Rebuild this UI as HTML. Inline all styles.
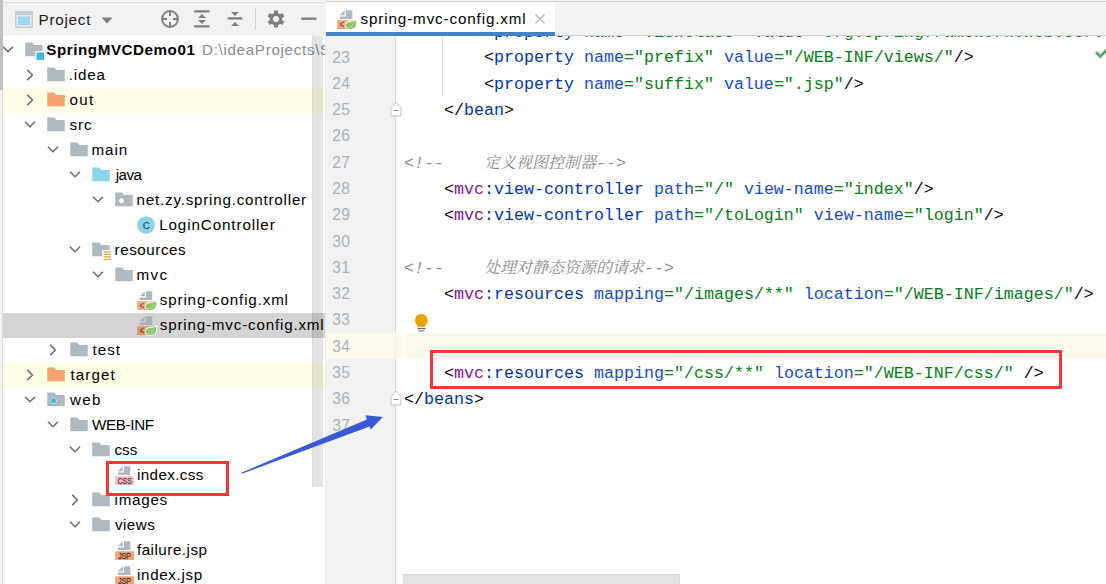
<!DOCTYPE html>
<html lang="zh"><head><meta charset="utf-8"><title>spring-mvc-config.xml</title>
<style>
html,body{margin:0;padding:0}
body{width:1106px;height:584px;overflow:hidden;position:relative;background:#fff;font-family:"Liberation Sans","Noto Sans CJK SC",sans-serif}
.abs,.ic,.row,.ln,.cl,.lab{position:absolute}
.ic{display:block;overflow:visible}
#tree{position:absolute;left:3px;top:36px;width:322px;height:548px;background:#fff;overflow:hidden}
.row{left:0;width:322px;height:25px}
.lab{white-space:nowrap;font-size:15.2px;letter-spacing:0.8px;color:#000;line-height:25px;top:-1px}
.lab b{font-weight:bold;letter-spacing:-.2px}
.pth{color:#8c8c8c;margin-left:6.600px;letter-spacing:.68px}
#ed{position:absolute;left:326px;top:36px;width:780px;height:548px;overflow:hidden;background:#fff}
.ln{left:0;width:30px;text-align:left;font-family:"Liberation Sans",sans-serif;font-size:15.600px;letter-spacing:.3px;color:#a9b0b6;line-height:26.28px;height:26.28px;white-space:pre}
.cl{white-space:pre;font-family:"Liberation Mono","Noto Serif CJK SC",monospace;font-size:16.67px;letter-spacing:0.0px;line-height:26.28px;height:26.28px;color:#080808}
.k{color:#080808}.t{color:#0033b3}.n{color:#871094}.a{color:#174ad4}.s{color:#067d17}
.c{color:#8c8c8c;font-style:italic}
.zh{font-family:"Noto Serif CJK SC",serif;font-size:16px;letter-spacing:0}
</style></head><body>
<div class="abs" style="left:0;top:0;width:1106px;height:3px;background:#f3f3f3"></div>
<div class="abs" style="left:0;top:1px;width:326px;height:1px;background:#f9f9f9"></div>
<div class="abs" style="left:0;top:2px;width:326px;height:1px;background:#dcdcdc"></div>
<div class="abs" style="left:326px;top:1px;width:780px;height:1px;background:#d2d2d2"></div>
<div class="abs" style="left:0;top:0;width:2px;height:584px;background:#f4f4f4"></div>
<div class="abs" style="left:2px;top:0;width:1px;height:584px;background:#dcdcdc"></div>
<div class="abs" style="left:0;top:0;width:3px;height:90px;background:#c0c0c0"></div>
<div class="abs" style="left:3px;top:3px;width:323px;height:33px;background:#f2f2f2"></div>
<svg class="ic" style="left:15px;top:11px" width="18" height="17" viewBox="0 0 18 17"><rect x="0" y="0" width="18" height="17" fill="#c9ced3"/><rect x="1.500" y="4" width="15" height="11.500" fill="#e8ecef"/><rect x="3" y="5.500" width="12" height="8.500" fill="#9bd6ee"/></svg>
<div class="abs" style="left:38.600px;top:3px;height:34px;line-height:34px;font-size:15.200px;letter-spacing:.75px;color:#1a1a1a;white-space:nowrap">Project</div>
<svg class="ic" style="left:101px;top:17px" width="12" height="7" viewBox="0 0 12 7"><path d="M0.500 0.500h11L6 6.500z" fill="#7f7f7f"/></svg>
<svg class="ic" style="left:158.700px;top:8.100px" width="22" height="22" viewBox="0 0 22 22"><circle cx="11" cy="11" r="7.900" fill="none" stroke="#7f7f7f" stroke-width="2"/><path d="M11 3v5M11 14v5M3 11h5M14 11h5" stroke="#7f7f7f" stroke-width="2"/></svg>
<svg class="ic" style="left:193px;top:8px" width="18" height="22" viewBox="0 0 18 22"><path d="M1.200 3.400h15.300M1.200 18.300h15.300" stroke="#7f7f7f" stroke-width="2.300"/><path d="M9 6l4 4H5zM9 16l4-4H5z" fill="#7f7f7f"/></svg>
<svg class="ic" style="left:226px;top:8px" width="18" height="22" viewBox="0 0 18 22"><path d="M1.700 10.400h14.600" stroke="#7f7f7f" stroke-width="2.300"/><path d="M9 8l4-4H5zM9 14l4 4H5z" fill="#7f7f7f"/></svg>
<div class="abs" style="left:255px;top:8px;width:1px;height:22px;background:#d1d1d1"></div>
<svg class="ic" style="left:267px;top:10px" width="18" height="18" viewBox="-9 -9 18 18"><g fill="#7f7f7f"><rect x="-2" y="-8.500" width="4" height="5" transform="rotate(0)"/><rect x="-2" y="-8.500" width="4" height="5" transform="rotate(60)"/><rect x="-2" y="-8.500" width="4" height="5" transform="rotate(120)"/><rect x="-2" y="-8.500" width="4" height="5" transform="rotate(180)"/><rect x="-2" y="-8.500" width="4" height="5" transform="rotate(240)"/><rect x="-2" y="-8.500" width="4" height="5" transform="rotate(300)"/></g><circle r="4.700" fill="none" stroke="#7f7f7f" stroke-width="3.200"/></svg>
<svg class="ic" style="left:301px;top:17px" width="16" height="4" viewBox="0 0 16 4"><rect x=".4" y=".5" width="15" height="2.400" fill="#7f7f7f"/></svg>
<div id="tree">
<div class="row" style="top:1.5px;">
<svg class="ic" style="left:-1px;top:6.0px" width="12" height="12" viewBox="0 0 12 12"><path d="M1 2.700L6 7.700l5-5" fill="none" stroke="#6e6e6e" stroke-width="1.600"/></svg>
<svg class="ic" style="left:21.0px;top:2.5px" width="20" height="20" viewBox="0 0 16 16"><path d="M1 2h5.6l1.6 2H15v5H9v4H1z" fill="#9AA7B0" fill-opacity=".8"/><rect x="10" y="10" width="6" height="6" fill="#40B6E0"/></svg>
<div class="lab" style="left:43.36px"><b style="letter-spacing:0.54px">SpringMVCDemo01</b><span class="pth">D:\ideaProjects\SpringMVCDemo01</span></div>
</div>
<div class="row" style="top:26.5px;">
<svg class="ic" style="left:21.2px;top:6.0px" width="12" height="12" viewBox="0 0 12 12"><path d="M3.200 0.900L8.400 6l-5.200 5.100" fill="none" stroke="#6e6e6e" stroke-width="1.500"/></svg>
<svg class="ic" style="left:43.0px;top:2.5px" width="20" height="20" viewBox="0 0 16 16"><path d="M1 2h5.6l1.6 2H15v9H1z" fill="#9AA7B0" fill-opacity="0.8"/></svg>
<div class="lab" style="left:65.82px;letter-spacing:0.80px">.idea</div>
</div>
<div class="row" style="top:51.5px;background:#fefde5;">
<svg class="ic" style="left:21.2px;top:6.0px" width="12" height="12" viewBox="0 0 12 12"><path d="M3.200 0.900L8.400 6l-5.200 5.100" fill="none" stroke="#6e6e6e" stroke-width="1.500"/></svg>
<svg class="ic" style="left:43.0px;top:2.5px" width="20" height="20" viewBox="0 0 16 16"><path d="M1 2h5.6l1.6 2H15v9H1z" fill="#F26522" fill-opacity="0.6"/></svg>
<div class="lab" style="left:66.52px;letter-spacing:1.35px">out</div>
</div>
<div class="row" style="top:76.5px;">
<svg class="ic" style="left:21px;top:6.0px" width="12" height="12" viewBox="0 0 12 12"><path d="M1 2.700L6 7.700l5-5" fill="none" stroke="#6e6e6e" stroke-width="1.600"/></svg>
<svg class="ic" style="left:43.0px;top:2.5px" width="20" height="20" viewBox="0 0 16 16"><path d="M1 2h5.6l1.6 2H15v9H1z" fill="#9AA7B0" fill-opacity="0.8"/></svg>
<div class="lab" style="left:66.51px;letter-spacing:0.89px">src</div>
</div>
<div class="row" style="top:101.5px;">
<svg class="ic" style="left:44px;top:6.0px" width="12" height="12" viewBox="0 0 12 12"><path d="M1 2.700L6 7.700l5-5" fill="none" stroke="#6e6e6e" stroke-width="1.600"/></svg>
<svg class="ic" style="left:66.0px;top:2.5px" width="20" height="20" viewBox="0 0 16 16"><path d="M1 2h5.6l1.6 2H15v9H1z" fill="#9AA7B0" fill-opacity="0.8"/></svg>
<div class="lab" style="left:88.57px;letter-spacing:0.88px">main</div>
</div>
<div class="row" style="top:126.5px;">
<svg class="ic" style="left:66px;top:6.0px" width="12" height="12" viewBox="0 0 12 12"><path d="M1 2.700L6 7.700l5-5" fill="none" stroke="#6e6e6e" stroke-width="1.600"/></svg>
<svg class="ic" style="left:88.0px;top:2.5px" width="20" height="20" viewBox="0 0 16 16"><path d="M1 2h5.6l1.6 2H15v9H1z" fill="#40B6E0" fill-opacity="0.6"/></svg>
<div class="lab" style="left:112.63px;letter-spacing:-0.50px">java</div>
</div>
<div class="row" style="top:151.5px;">
<svg class="ic" style="left:89px;top:6.0px" width="12" height="12" viewBox="0 0 12 12"><path d="M1 2.700L6 7.700l5-5" fill="none" stroke="#6e6e6e" stroke-width="1.600"/></svg>
<svg class="ic" style="left:111.0px;top:2.5px" width="20" height="20" viewBox="0 0 16 16"><path d="M1 2h5.6l1.6 2H15v9H1z M6 6.5a2 2 0 1 0 0.001 0z" fill="#9AA7B0" fill-opacity=".8" fill-rule="evenodd"/></svg>
<div class="lab" style="left:133.57px;letter-spacing:0.78px">net.zy.spring.controller</div>
</div>
<div class="row" style="top:176.5px;">
<svg class="ic" style="left:133.0px;top:2.5px" width="20" height="20" viewBox="0 0 16 16"><circle cx="8" cy="8" r="7" fill="#40B6E0" fill-opacity=".6"/><text x="0" y="0" transform="translate(8.200 10.800) scale(1.150 1)" font-family="Liberation Sans, sans-serif" font-size="10.500" text-anchor="middle" fill="#231F20" fill-opacity=".75">c</text></svg>
<div class="lab" style="left:156.13px;letter-spacing:0.90px">LoginController</div>
</div>
<div class="row" style="top:201.5px;">
<svg class="ic" style="left:66px;top:6.0px" width="12" height="12" viewBox="0 0 12 12"><path d="M1 2.700L6 7.700l5-5" fill="none" stroke="#6e6e6e" stroke-width="1.600"/></svg>
<svg class="ic" style="left:88.0px;top:2.5px" width="20" height="20" viewBox="0 0 16 16"><path d="M1 2h5.6l1.6 2H15v4H9v5H1z" fill="#9AA7B0" fill-opacity=".8"/><path d="M10 9h6v1h-6zM10 11h6v1h-6zM10 13h6v1h-6zM10 15h6v1h-6z" fill="#E2A53F"/></svg>
<div class="lab" style="left:111.57px;letter-spacing:0.55px">resources</div>
</div>
<div class="row" style="top:226.5px;">
<svg class="ic" style="left:89px;top:6.0px" width="12" height="12" viewBox="0 0 12 12"><path d="M1 2.700L6 7.700l5-5" fill="none" stroke="#6e6e6e" stroke-width="1.600"/></svg>
<svg class="ic" style="left:111.0px;top:2.5px" width="20" height="20" viewBox="0 0 16 16"><path d="M1 2h5.6l1.6 2H15v9H1z" fill="#9AA7B0" fill-opacity="0.8"/></svg>
<div class="lab" style="left:133.57px;letter-spacing:1.35px">mvc</div>
</div>
<div class="row" style="top:251.5px;">
<svg class="ic" style="left:133.0px;top:2.5px" width="20" height="20" viewBox="0 0 16 16"><path d="M7 1L3 5h4z" fill="#9AA7B0" fill-opacity=".8"/><path d="M8 1v5H3v2h10V1z" fill="#9AA7B0" fill-opacity=".8"/><rect x="1" y="9" width="13.500" height="7" fill="#F26522" fill-opacity=".6"/><text transform="translate(2.700 15.400) scale(.68 1)" font-family="Liberation Sans, sans-serif" font-size="9.400" fill="#3a2218" fill-opacity=".85">&lt;</text><path d="M16.100 9.200C16.500 12.700 15.500 16 11.500 16C9.100 16 7.600 14.900 7.600 13.300C7.600 11.100 10 10.100 12.400 10.100C14 10.100 15.200 9.800 16.100 9.200Z" fill="#8CC66A" stroke="#fff" stroke-width="1.300" paint-order="stroke"/><path d="M9.300 15.100C11.300 14.700 13.300 13.500 14.500 11.500" stroke="#fff" stroke-opacity=".8" stroke-width=".55" stroke-dasharray="1 .35" fill="none"/></svg>
<div class="lab" style="left:156.77px;letter-spacing:0.84px">spring-config.xml</div>
</div>
<div class="row" style="top:276.5px;background:#d4d4d4;">
<svg class="ic" style="left:133.0px;top:2.5px" width="20" height="20" viewBox="0 0 16 16"><path d="M7 1L3 5h4z" fill="#9AA7B0" fill-opacity=".8"/><path d="M8 1v5H3v2h10V1z" fill="#9AA7B0" fill-opacity=".8"/><rect x="1" y="9" width="13.500" height="7" fill="#F26522" fill-opacity=".6"/><text transform="translate(2.700 15.400) scale(.68 1)" font-family="Liberation Sans, sans-serif" font-size="9.400" fill="#3a2218" fill-opacity=".85">&lt;</text><path d="M16.100 9.200C16.500 12.700 15.500 16 11.500 16C9.100 16 7.600 14.900 7.600 13.300C7.600 11.100 10 10.100 12.400 10.100C14 10.100 15.200 9.800 16.100 9.200Z" fill="#8CC66A" stroke="#fff" stroke-width="1.300" paint-order="stroke"/><path d="M9.300 15.100C11.300 14.700 13.300 13.500 14.500 11.500" stroke="#fff" stroke-opacity=".8" stroke-width=".55" stroke-dasharray="1 .35" fill="none"/></svg>
<div class="lab" style="left:156.78px;letter-spacing:0.81px">spring-mvc-config.xml</div>
</div>
<div class="row" style="top:301.5px;">
<svg class="ic" style="left:44.2px;top:6.0px" width="12" height="12" viewBox="0 0 12 12"><path d="M3.200 0.900L8.400 6l-5.200 5.100" fill="none" stroke="#6e6e6e" stroke-width="1.500"/></svg>
<svg class="ic" style="left:66.0px;top:2.5px" width="20" height="20" viewBox="0 0 16 16"><path d="M1 2h5.6l1.6 2H15v9H1z" fill="#9AA7B0" fill-opacity="0.8"/></svg>
<div class="lab" style="left:89.60px;letter-spacing:0.95px">test</div>
</div>
<div class="row" style="top:326.5px;background:#fefde5;">
<svg class="ic" style="left:21.2px;top:6.0px" width="12" height="12" viewBox="0 0 12 12"><path d="M3.200 0.900L8.400 6l-5.200 5.100" fill="none" stroke="#6e6e6e" stroke-width="1.500"/></svg>
<svg class="ic" style="left:43.0px;top:2.5px" width="20" height="20" viewBox="0 0 16 16"><path d="M1 2h5.6l1.6 2H15v9H1z" fill="#F26522" fill-opacity="0.6"/></svg>
<div class="lab" style="left:67.60px;letter-spacing:1.05px">target</div>
</div>
<div class="row" style="top:351.5px;">
<svg class="ic" style="left:21px;top:6.0px" width="12" height="12" viewBox="0 0 12 12"><path d="M1 2.700L6 7.700l5-5" fill="none" stroke="#6e6e6e" stroke-width="1.600"/></svg>
<svg class="ic" style="left:43.0px;top:2.5px" width="20" height="20" viewBox="0 0 16 16"><path d="M1 2h5.6l1.6 2H15v9H1z M6 6a2.5 2.5 0 1 0 0.001 0z" fill="#9AA7B0" fill-opacity=".8" fill-rule="evenodd"/><circle cx="6" cy="8.500" r="2.050" fill="#40B6E0"/></svg>
<div class="lab" style="left:67.00px;letter-spacing:1.30px">web</div>
</div>
<div class="row" style="top:376.5px;">
<svg class="ic" style="left:44px;top:6.0px" width="12" height="12" viewBox="0 0 12 12"><path d="M1 2.700L6 7.700l5-5" fill="none" stroke="#6e6e6e" stroke-width="1.600"/></svg>
<svg class="ic" style="left:66.0px;top:2.5px" width="20" height="20" viewBox="0 0 16 16"><path d="M1 2h5.6l1.6 2H15v9H1z" fill="#9AA7B0" fill-opacity="0.8"/></svg>
<div class="lab" style="left:88.91px;letter-spacing:-0.32px">WEB-INF</div>
</div>
<div class="row" style="top:401.5px;">
<svg class="ic" style="left:66px;top:6.0px" width="12" height="12" viewBox="0 0 12 12"><path d="M1 2.700L6 7.700l5-5" fill="none" stroke="#6e6e6e" stroke-width="1.600"/></svg>
<svg class="ic" style="left:88.0px;top:2.5px" width="20" height="20" viewBox="0 0 16 16"><path d="M1 2h5.6l1.6 2H15v9H1z" fill="#9AA7B0" fill-opacity="0.8"/></svg>
<div class="lab" style="left:111.51px;letter-spacing:-0.02px">css</div>
</div>
<div class="row" style="top:426.5px;">
<svg class="ic" style="left:111.0px;top:2.5px" width="20" height="20" viewBox="0 0 16 16"><path d="M7 1L3 5h4z" fill="#9AA7B0" fill-opacity=".8"/><path d="M8 1v5H3v2h10V1z" fill="#9AA7B0" fill-opacity=".8"/><rect x="1" y="9" width="15" height="7" fill="#F98B9E" fill-opacity=".6"/><text transform="translate(8.500 15.300) scale(.8 1)" font-family="Liberation Sans, sans-serif" font-size="7" text-anchor="middle" fill="#231F20" fill-opacity=".75" stroke="#231F20" stroke-opacity=".6" stroke-width=".35">CSS</text></svg>
<div class="lab" style="left:134.00px;letter-spacing:0.37px">index.css</div>
</div>
<div class="row" style="top:451.5px;">
<svg class="ic" style="left:66.2px;top:6.0px" width="12" height="12" viewBox="0 0 12 12"><path d="M3.200 0.900L8.400 6l-5.200 5.100" fill="none" stroke="#6e6e6e" stroke-width="1.500"/></svg>
<svg class="ic" style="left:88.0px;top:2.5px" width="20" height="20" viewBox="0 0 16 16"><path d="M1 2h5.6l1.6 2H15v9H1z" fill="#9AA7B0" fill-opacity="0.8"/></svg>
<div class="lab" style="left:111.60px;letter-spacing:0.72px">images</div>
</div>
<div class="row" style="top:476.5px;">
<svg class="ic" style="left:66px;top:6.0px" width="12" height="12" viewBox="0 0 12 12"><path d="M1 2.700L6 7.700l5-5" fill="none" stroke="#6e6e6e" stroke-width="1.600"/></svg>
<svg class="ic" style="left:88.0px;top:2.5px" width="20" height="20" viewBox="0 0 16 16"><path d="M1 2h5.6l1.6 2H15v9H1z" fill="#9AA7B0" fill-opacity="0.8"/></svg>
<div class="lab" style="left:111.91px;letter-spacing:0.49px">views</div>
</div>
<div class="row" style="top:501.5px;">
<svg class="ic" style="left:111.0px;top:2.5px" width="20" height="20" viewBox="0 0 16 16"><path d="M7 1L3 5h4z" fill="#9AA7B0" fill-opacity=".8"/><path d="M8 1v5H3v2h10V1z" fill="#9AA7B0" fill-opacity=".8"/><rect x="1" y="9" width="15" height="7" fill="#F26522" fill-opacity=".6"/><text transform="translate(8.500 15.300) scale(.8 1)" font-family="Liberation Sans, sans-serif" font-size="7" text-anchor="middle" fill="#231F20" fill-opacity=".75" stroke="#231F20" stroke-opacity=".6" stroke-width=".35">JSP</text></svg>
<div class="lab" style="left:133.91px;letter-spacing:0.51px">failure.jsp</div>
</div>
<div class="row" style="top:526.5px;">
<svg class="ic" style="left:111.0px;top:2.5px" width="20" height="20" viewBox="0 0 16 16"><path d="M7 1L3 5h4z" fill="#9AA7B0" fill-opacity=".8"/><path d="M8 1v5H3v2h10V1z" fill="#9AA7B0" fill-opacity=".8"/><rect x="1" y="9" width="15" height="7" fill="#F26522" fill-opacity=".6"/><text transform="translate(8.500 15.300) scale(.8 1)" font-family="Liberation Sans, sans-serif" font-size="7" text-anchor="middle" fill="#231F20" fill-opacity=".75" stroke="#231F20" stroke-opacity=".6" stroke-width=".35">JSP</text></svg>
<div class="lab" style="left:134.00px;letter-spacing:0.66px">index.jsp</div>
</div>
<div class="abs" style="left:309px;top:0;width:11px;height:451px;background:rgba(0,0,0,.1);border-left:1px solid rgba(0,0,0,.04);box-sizing:border-box"></div>
</div>
<div class="abs" style="left:325px;top:36px;width:1px;height:548px;background:#ececec"></div>
<div class="abs" style="left:326px;top:2px;width:780px;height:33px;background:#f2f2f2"></div>
<div class="abs" style="left:326px;top:35px;width:780px;height:1px;background:#d4d4d4"></div>
<div class="abs" style="left:326px;top:2px;width:229px;height:30px;background:#fff"></div>
<div class="abs" style="left:326px;top:32px;width:229px;height:4px;background:#4083c9"></div>
<svg class="ic" style="left:335.75px;top:9px" width="20" height="20" viewBox="0 0 16 16"><path d="M7 1L3 5h4z" fill="#9AA7B0" fill-opacity=".8"/><path d="M8 1v5H3v2h10V1z" fill="#9AA7B0" fill-opacity=".8"/><rect x="1" y="9" width="13.500" height="7" fill="#F26522" fill-opacity=".6"/><text transform="translate(2.700 15.400) scale(.68 1)" font-family="Liberation Sans, sans-serif" font-size="9.400" fill="#3a2218" fill-opacity=".85">&lt;</text><path d="M16.100 9.200C16.500 12.700 15.500 16 11.500 16C9.100 16 7.600 14.900 7.600 13.300C7.600 11.100 10 10.100 12.400 10.100C14 10.100 15.200 9.800 16.100 9.200Z" fill="#8CC66A" stroke="#fff" stroke-width="1.300" paint-order="stroke"/><path d="M9.300 15.100C11.300 14.700 13.300 13.500 14.500 11.500" stroke="#fff" stroke-opacity=".8" stroke-width=".55" stroke-dasharray="1 .35" fill="none"/></svg>
<div class="abs" style="left:360.600px;top:2px;height:34px;line-height:34px;font-size:15.2px;letter-spacing:.87px;color:#000;white-space:nowrap">spring-mvc-config.xml</div>
<svg class="ic" style="left:534px;top:13px" width="12" height="12" viewBox="0 0 12 12"><path d="M1.500 1.500l9 9M10.500 1.500l-9 9" stroke="#b4b4b4" stroke-width="1.200" fill="none"/></svg>
<div id="ed">
<div class="abs" style="left:0;top:0;width:69px;height:548px;background:#f2f2f2"></div>
<div class="abs" style="left:69px;top:0;width:1px;height:548px;background:#d9d9d9"></div>
<div class="abs" style="left:0;top:297px;width:780px;height:26px;background:#fcfaed"></div>
<div class="abs" style="left:69px;top:297px;width:1px;height:26px;background:#f3f1e6"></div>
<div class="abs" style="left:77px;top:297px;width:1px;height:26px;background:#fff;opacity:.7"></div>
<div class="abs" style="left:116px;top:0;width:1px;height:60px;background:#e3e3e3"></div>
<div class="ln" style="top:-17.67px;left:6.300px">22</div>
<div class="cl" style="top:-16.17px;left:78px">        <span class="k">&lt;</span><span class="t">property</span><span class="a"> name</span><span class="s">="viewClass"</span><span class="a"> value</span><span class="s">="org.springframework.web.servlet.view.JstlView"</span><span class="k">/&gt;</span></div>
<div class="ln" style="top:8.61px;left:6.300px">23</div>
<div class="cl" style="top:9.41px;left:78px">        <span class="k">&lt;</span><span class="t">property</span><span class="a"> name</span><span class="s">="prefix"</span><span class="a"> value</span><span class="s">="/WEB-INF/views/"</span><span class="k">/&gt;</span></div>
<div class="ln" style="top:34.89px;left:6.300px">24</div>
<div class="cl" style="top:35.69px;left:78px">        <span class="k">&lt;</span><span class="t">property</span><span class="a"> name</span><span class="s">="suffix"</span><span class="a"> value</span><span class="s">=".jsp"</span><span class="k">/&gt;</span></div>
<div class="ln" style="top:61.17px;left:6.300px">25</div>
<div class="cl" style="top:61.97px;left:78px">    <span class="k">&lt;/</span><span class="t">bean</span><span class="k">&gt;</span></div>
<div class="ln" style="top:87.45px;left:6.300px">26</div>
<div class="ln" style="top:113.73px;left:6.300px">27</div>
<div class="cl" style="top:113.13px;left:78px"><span class="c">&lt;!--    <span class="zh">定义视图控制器</span>--&gt;</span></div>
<div class="ln" style="top:140.01px;left:6.300px">28</div>
<div class="cl" style="top:140.81px;left:78px">    <span class="k">&lt;</span><span class="n">mvc</span><span class="t">:view-controller</span><span class="a"> path</span><span class="s">="/"</span><span class="a"> view-name</span><span class="s">="index"</span><span class="k">/&gt;</span></div>
<div class="ln" style="top:166.29px;left:6.300px">29</div>
<div class="cl" style="top:167.09px;left:78px">    <span class="k">&lt;</span><span class="n">mvc</span><span class="t">:view-controller</span><span class="a"> path</span><span class="s">="/toLogin"</span><span class="a"> view-name</span><span class="s">="login"</span><span class="k">/&gt;</span></div>
<div class="ln" style="top:192.57px;left:6.300px">30</div>
<div class="ln" style="top:218.85px;left:6.300px">31</div>
<div class="cl" style="top:218.25px;left:78px"><span class="c">&lt;!--    <span class="zh">处理对静态资源的请求</span>--&gt;</span></div>
<div class="ln" style="top:245.13px;left:6.300px">32</div>
<div class="cl" style="top:245.93px;left:78px">    <span class="k">&lt;</span><span class="n">mvc</span><span class="t">:resources</span><span class="a"> mapping</span><span class="s">="/images/**"</span><span class="a"> location</span><span class="s">="/WEB-INF/images/"</span><span class="k">/&gt;</span></div>
<div class="ln" style="top:271.41px;left:6.300px">33</div>
<div class="ln" style="top:297.69px;left:6.300px">34</div>
<div class="ln" style="top:323.97px;left:6.300px">35</div>
<div class="cl" style="top:324.77px;left:78px">    <span class="k">&lt;</span><span class="n">mvc</span><span class="t">:resources</span><span class="a"> mapping</span><span class="s">="/css/**"</span><span class="a"> location</span><span class="s">="/WEB-INF/css/"</span><span class="k"> /&gt;</span></div>
<div class="ln" style="top:350.25px;left:6.300px">36</div>
<div class="cl" style="top:351.05px;left:78px"><span class="k">&lt;/</span><span class="t">beans</span><span class="k">&gt;</span></div>
<div class="ln" style="top:376.53px;left:6.300px">37</div>
<svg class="ic" style="left:64px;top:64.61px" width="12" height="16" viewBox="0 0 12 16"><path d="M1 6.500L6 1l5 5.500V15H1z" fill="#fff" stroke="#c4c4c4" stroke-width="1"/><path d="M3.500 9.500h5" stroke="#9a9a9a" stroke-width="1"/></svg>
<svg class="ic" style="left:64px;top:353.69px" width="12" height="16" viewBox="0 0 12 16"><path d="M1 6.500L6 1l5 5.500V15H1z" fill="#fff" stroke="#c4c4c4" stroke-width="1"/><path d="M3.500 9.500h5" stroke="#9a9a9a" stroke-width="1"/></svg>
<svg class="ic" style="left:88.500px;top:278px" width="13" height="18" viewBox="0 0 13 18"><circle cx="6.350" cy="6.300" r="6.300" fill="#eda200"/><rect x="2.300" y="8" width="8.200" height="4.700" fill="#eda200"/><rect x="2.500" y="13.900" width="8" height="1.300" fill="#6e6e6e"/><rect x="3.500" y="16.100" width="6" height="1.500" fill="#9a9a9a"/></svg>
<svg class="ic" style="left:769px;top:11px" width="14" height="12" viewBox="0 0 14 12"><path d="M1 5.300l4.200 4.200L13.500 1.200" fill="none" stroke="#59a869" stroke-width="3"/></svg>
<div class="abs" style="left:77px;top:538px;width:277px;height:11px;background:#e3e3e3;border:1px solid #d9d9d9;box-sizing:border-box"></div>
</div>
<div class="abs" style="left:430px;top:350px;width:626px;height:33px;border:3px solid #fb3535"></div>
<div class="abs" style="left:106px;top:461px;width:117px;height:29px;border:3px solid #fb3535"></div>
<svg class="ic" style="left:0;top:0" width="1106" height="584" viewBox="0 0 1106 584"><path d="M241.300 472.700L366.900 419.400L365.400 415.300L382.900 417.100L370.800 429.500L369.600 426.400L241.900 473.700Z" fill="#3858d6"/></svg>
</body></html>
